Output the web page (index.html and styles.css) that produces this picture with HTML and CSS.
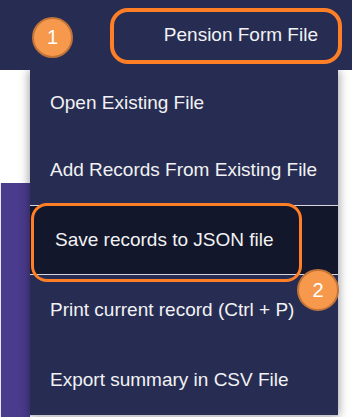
FILE: index.html
```html
<!DOCTYPE html>
<html>
<head>
    <meta charset="utf-8">
    <title>Pension Form File</title>
    <link rel="stylesheet" href="styles.css">
</head>
<body>
    <header class="topbar">
        <span class="title">Pension Form File</span>
    </header>

    <div class="page">
        <div class="side">
            <div class="side-top"></div>
            <div class="side-bottom"></div>
        </div>
        <ul class="menu">
            <li>Open Existing File</li>
            <li>Add Records From Existing File</li>
            <li class="active">Save records to JSON file</li>
            <li>Print current record (Ctrl + P)</li>
            <li>Export summary in CSV File</li>
        </ul>
        <div class="gutter"></div>
    </div>

    <!-- annotations -->
    <div class="ring ring-title"></div>
    <div class="ring ring-save"></div>
    <span class="badge badge-one">1</span>
    <span class="badge badge-two">2</span>
</body>
</html>
```

FILE: styles.css
```css
body {
	margin: 0;
	width: 352px;
	height: 417px;
	overflow: hidden;
	position: relative;
	background: #fff;
	font-family: "Liberation Sans", Arial, sans-serif;
	color: #f2f2f4;
}

.topbar {
	height: 70px;
	background: #272d52;
	display: flex;
	align-items: center;
	justify-content: flex-end;
	padding-right: 34px;
	position: relative;
	z-index: 2;
}

.title {
	font-size: 19px;
}

.page {
	display: flex;
	height: 347px;
}

.side {
	width: 30px;
	display: flex;
	flex-direction: column;
}

.side-top {
	height: 113px;
	background: #fff;
}

.side-bottom {
	flex: 1;
	background: #4a3b8c;
	border-left: 1px solid #e8e6f0;
}

.menu {
	list-style: none;
	margin: 0;
	padding: 0;
	width: 308px;
	background: #272d52;
	box-shadow: 0 0 10px rgba(0, 0, 0, .45);
	border-bottom: 1px solid #c9c9cf;
	height: 345px;
	position: relative;
	z-index: 1;
}

.menu li {
	height: 70px;
	box-sizing: border-box;
	display: flex;
	align-items: center;
	padding-left: 20px;
	font-size: 19px;
}

.menu li:first-child {
	height: 65px;
}

.menu li:last-child {
	height: 69px;
}

.menu li.active {
	background: #13172b;
	border-top: 1px solid #d6d6dc;
	border-bottom: 1px solid #d6d6dc;
	padding-left: 25px;
}

.gutter {
	flex: 1;
	background: #fff;
}

.ring {
	position: absolute;
	box-sizing: border-box;
	border: 4px solid #ff7f27;
	z-index: 3;
}

.ring-title {
	left: 110px;
	top: 8px;
	width: 232px;
	height: 56px;
	border-radius: 18px;
}

.ring-save {
	left: 31px;
	top: 203px;
	width: 271px;
	height: 79px;
	border-width: 3.5px;
	border-radius: 16px;
}

.badge {
	position: absolute;
	box-sizing: border-box;
	width: 41px;
	height: 41px;
	border-radius: 50%;
	background: #f6994d;
	border: 2px solid #c27438;
	color: #fff;
	font-size: 20px;
	display: flex;
	align-items: center;
	justify-content: center;
	z-index: 4;
}

.badge-one {
	left: 32px;
	top: 17px;
}

.badge-two {
	left: 297px;
	top: 269px;
	width: 42px;
	height: 42px;
}
```
